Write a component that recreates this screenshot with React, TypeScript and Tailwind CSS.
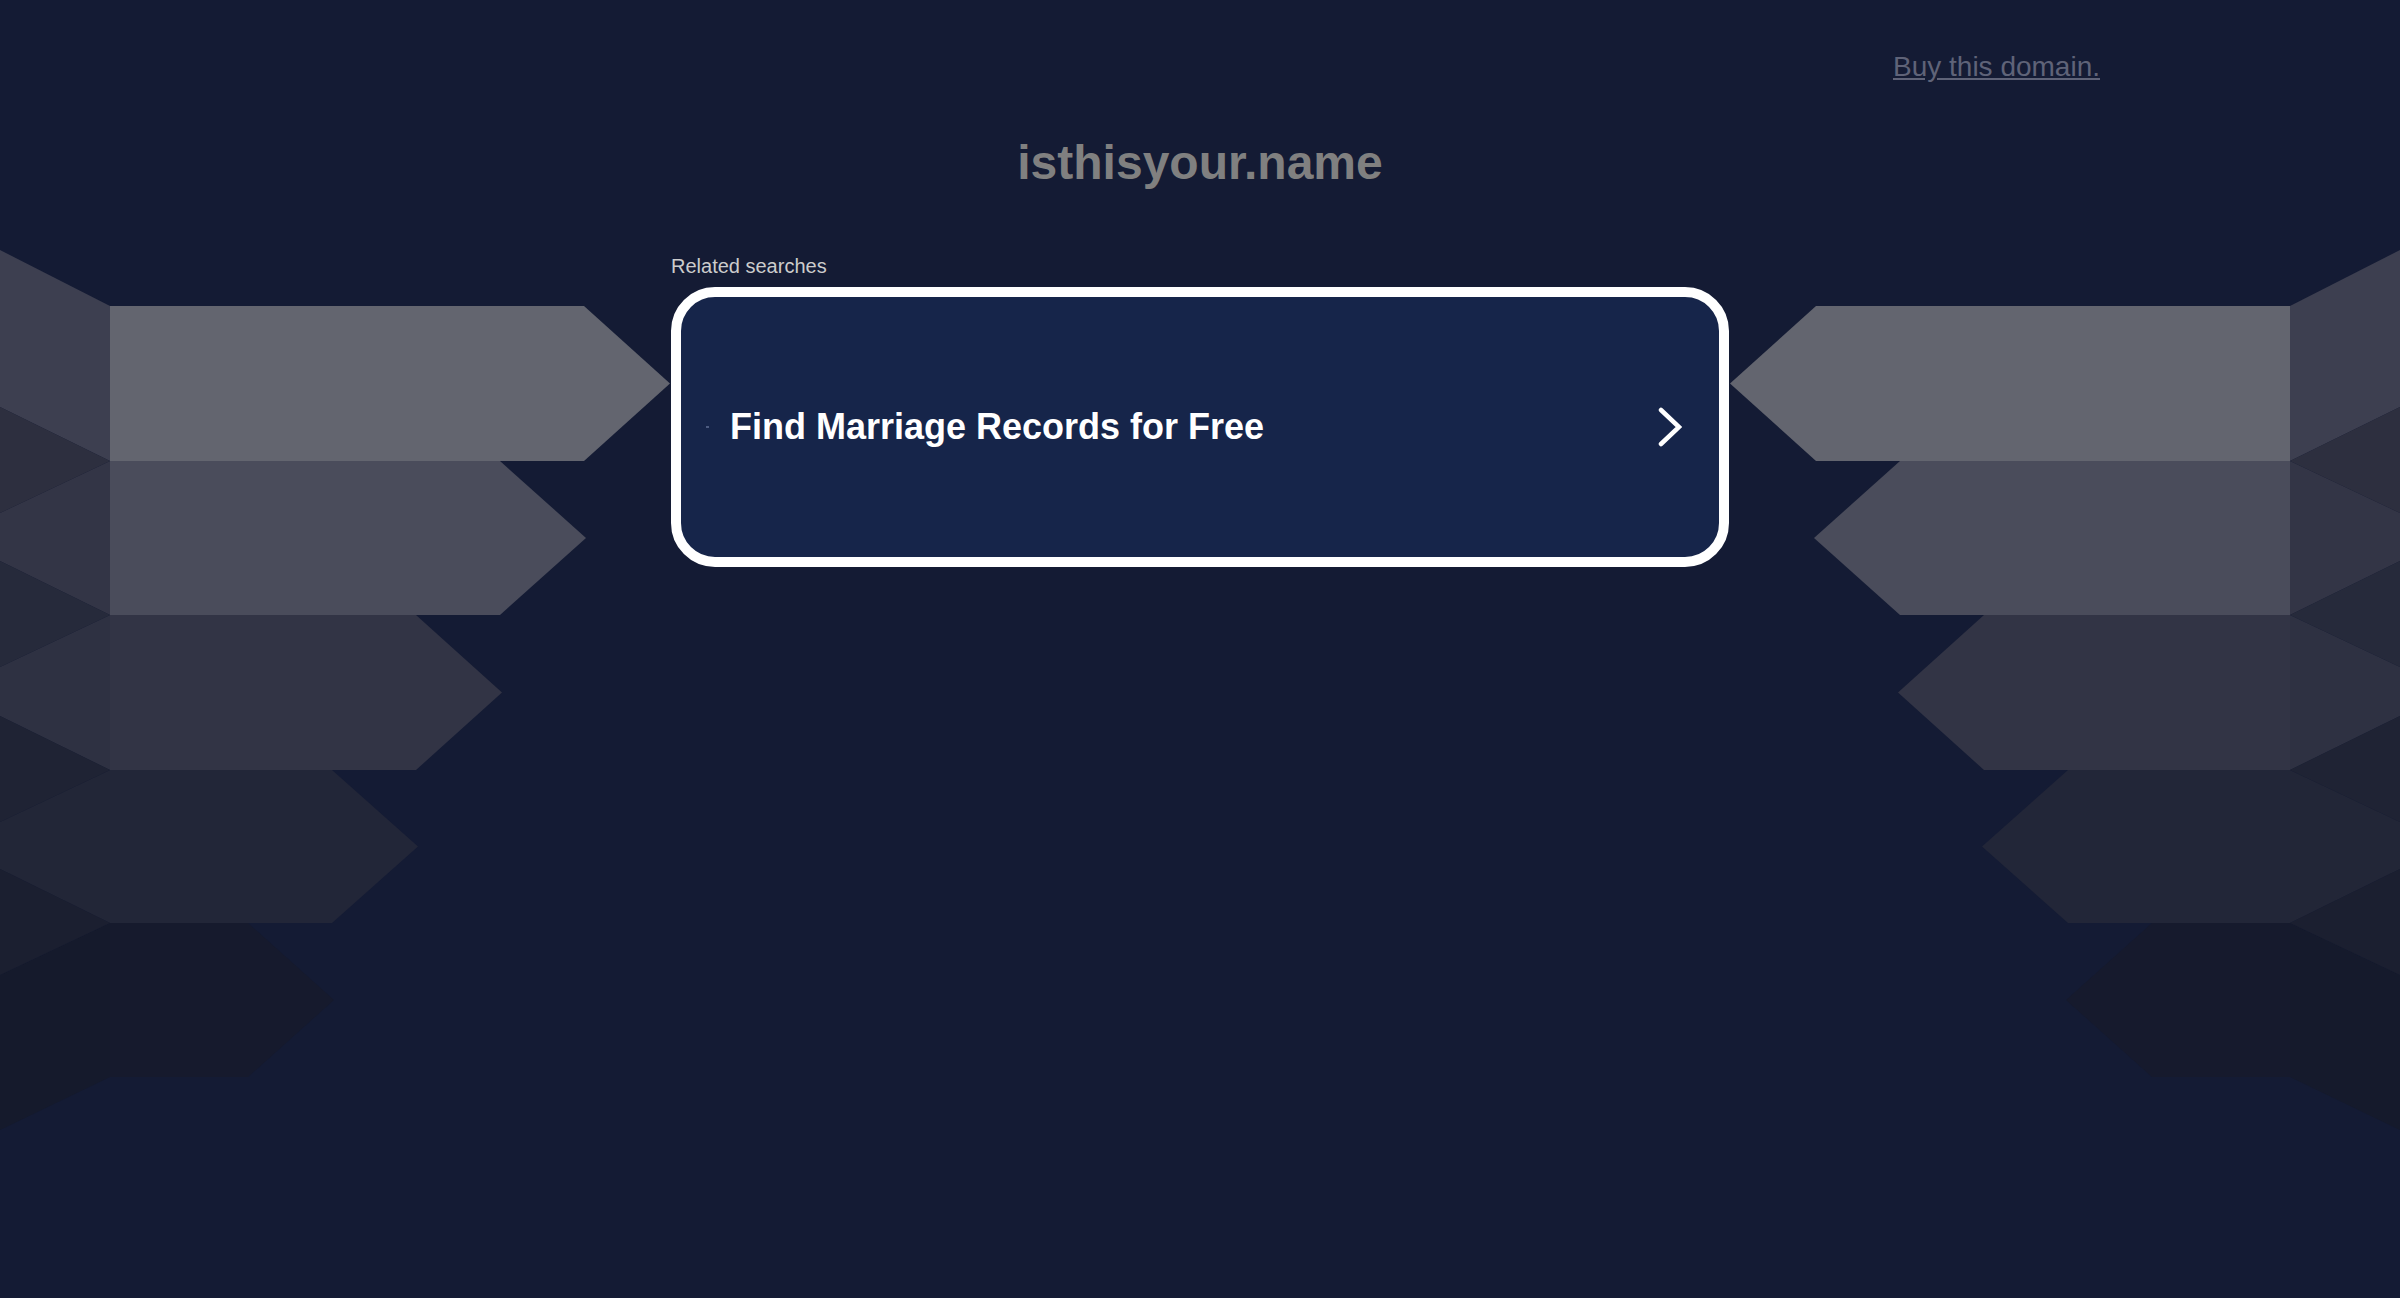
import React from "react";

// Boundaries of the stacked "wing" arrows (y at the fold line, x = 110)
const rows = [306, 461, 615, 770, 923, 1077];
const arrowFill = ["#63656f", "#4a4c5b", "#323445", "#222638", "#161a2d"];
const faceFill = ["#3d3f50", "#333546", "#2e3142", "#222637", "#151a2c"];
const gapFill = ["#2d2f3f", "#262a3b", "#1f2334", "#1b1f30"];

function Wing({ className }: { className: string }) {
  const fold = 110;
  return (
    <svg
      className={className}
      width="680"
      height="1298"
      viewBox="0 0 680 1298"
      aria-hidden="true"
    >
      {/* side faces */}
      {faceFill.map((c, k) => {
        const t = rows[k];
        const b = rows[k + 1];
        const top = k === 0 ? t - 56 : t + 52;
        const bot = k === faceFill.length - 1 ? b + 53 : b - 54;
        return (
          <polygon
            key={"f" + k}
            points={`0,${top} ${fold},${t} ${fold},${b} 0,${bot}`}
            fill={c}
          />
        );
      })}
      {/* darker wedges between faces */}
      {gapFill.map((c, k) => {
        const y = rows[k + 1];
        return (
          <polygon
            key={"g" + k}
            points={`0,${y - 54} ${fold},${y} 0,${y + 52}`}
            fill={c}
          />
        );
      })}
      {/* arrows */}
      {arrowFill.map((c, k) => {
        const t = rows[k];
        const b = rows[k + 1];
        const flat = 584 - 84 * k;
        const tip = 670 - 84 * k;
        return (
          <polygon
            key={"a" + k}
            points={`${fold},${t} ${flat},${t} ${tip},${(t + b) / 2} ${flat},${b} ${fold},${b}`}
            fill={c}
          />
        );
      })}
    </svg>
  );
}

export default function App() {
  return (
    <div
      className="relative min-h-[1298px] w-full overflow-hidden bg-[#141b34]"
      style={{ fontFamily: "'Liberation Sans', Arial, sans-serif" }}
    >
      <Wing className="absolute left-0 top-0" />
      <Wing className="absolute right-0 top-0 -scale-x-100" />

      <div className="relative flex flex-col items-center">
        {/* Top bar */}
        <div className="flex w-[1800px] justify-end pt-[53px]">
          <a href="#" className="text-[28px] leading-none text-[#5f6378] underline">
            Buy this domain.
          </a>
        </div>

        {/* Domain */}
        <h1 className="mt-[58px] text-[48px] font-bold leading-none text-[#808080]">
          isthisyour.name
        </h1>

        {/* Related searches */}
        <div className="mt-[69px] flex w-[1058px] flex-col">
          <p className="text-[20px] leading-none text-[#cccccc]">Related searches</p>
          <a
            href="#"
            className="mt-[11px] flex h-[280px] w-full items-center justify-between rounded-[44px] border-[10px] border-white bg-[#16254a] pl-[25px] pr-[37px]"
          >
            <span className="flex items-center gap-[21px]">
              <span className="h-[2px] w-[3px] bg-[#4c5b80]" />
              <span className="text-[36px] font-bold leading-none text-white">
                Find Marriage Records for Free
              </span>
            </span>
            <svg width="24" height="40" viewBox="0 0 24 40" fill="none">
              <polyline
                points="3,3 21,20 3,37"
                stroke="white"
                strokeWidth="4.5"
                strokeLinecap="round"
                strokeLinejoin="miter"
              />
            </svg>
          </a>
        </div>
      </div>
    </div>
  );
}
